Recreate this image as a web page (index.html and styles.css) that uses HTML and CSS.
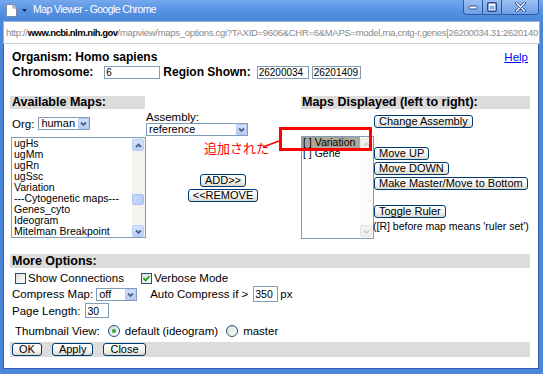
FILE: index.html
```html
<!DOCTYPE html>
<html lang="ja">
<head>
    <meta charset="UTF-8">
    <meta name="viewport" content="width=device-width, initial-scale=1.0">
    <title>Map Viewer</title>
    <link rel="stylesheet" href="styles.css">
</head>
<body>
<div class="window">
    <div class="titlebar">
        <svg class="page-icon" width="11" height="13" viewBox="0 0 11 13">
            <path d="M0.5 0.5h6.5l3.5 3.5v8.5h-10z" fill="#fff" stroke="#7d8ca3"/>
            <path d="M7 0.5v3.5h3.5" fill="#e4e9f0" stroke="#7d8ca3"/>
        </svg>
        <svg class="menu-arrow" width="5" height="3" viewBox="0 0 5 3"><path d="M0 0h5l-2.5 3z" fill="#10254f"/></svg>
        <span class="title">Map Viewer - Google Chrome</span>
        <div class="caption-buttons">
            <span class="cap-btn">
                <svg width="10" height="5" viewBox="0 0 10 5"><rect x="1" y="1" width="8" height="3" rx="1.5" fill="#fff" stroke="#27498a"/></svg>
            </span>
            <span class="cap-btn">
                <svg width="10" height="10" viewBox="0 0 10 10"><rect x="1" y="1" width="8" height="8" rx="1" fill="none" stroke="#27498a" stroke-width="2"/><rect x="2" y="2" width="6" height="6" fill="none" stroke="#fff" stroke-width="1"/><rect x="2" y="2" width="6" height="1.6" fill="#fff"/></svg>
            </span>
            <span class="cap-btn cap-close">
                <svg width="11" height="10" viewBox="0 0 11 10"><path d="M1.5 1L9.5 9M9.5 1L1.5 9" stroke="#27498a" stroke-width="3" stroke-linecap="round"/><path d="M1.5 1L9.5 9M9.5 1L1.5 9" stroke="#fff" stroke-width="1.4" stroke-linecap="round"/></svg>
            </span>
        </div>
    </div>

    <div class="addressbar">
        <span class="url-dim">http://</span><span class="url-host">www.ncbi.nlm.nih.gov</span><span class="url-dim">/mapview/maps_options.cgi?TAXID=9606&amp;CHR=6&amp;MAPS=model,rna,cntg-r,genes[26200034.31:2620140</span>
    </div>

    <div class="page">
        <div class="info-row">
            <b class="strong">Organism: Homo sapiens</b>
            <a href="#" class="help">Help</a>
        </div>
        <div class="region-row">
            <b class="strong">Chromosome:</b>
            <input type="text" class="field field-chrom" value="6">
            <b class="strong region-label">Region Shown:</b>
            <input type="text" class="field field-from" value="26200034">
            <input type="text" class="field field-to" value="26201409">
        </div>

        <div class="maps">
            <div class="bar bar-available">Available Maps:</div>
            <div class="bar bar-displayed">Maps Displayed (left to right):</div>

            <div class="org-cell">
                <span>Org:</span>
                <span class="combo combo-org">
                    <span class="combo-value">human</span>
                    <span class="combo-arrow"><svg width="9" height="9" viewBox="0 0 9 9"><path d="M2 3.5L4.5 6L7 3.5" fill="none" stroke="#4d6185" stroke-width="1.8"/></svg></span>
                </span>
            </div>
            <div class="assembly-cell">
                <div class="assembly-label">Assembly:</div>
                <span class="combo combo-assembly">
                    <span class="combo-value">reference</span>
                    <span class="combo-arrow"><svg width="9" height="9" viewBox="0 0 9 9"><path d="M2 3.5L4.5 6L7 3.5" fill="none" stroke="#4d6185" stroke-width="1.8"/></svg></span>
                </span>
            </div>
            <div class="change-cell">
                <button class="btn">Change Assembly</button>
            </div>

            <div class="listbox listbox-available">
                <ul class="options">
                    <li>ugHs</li>
                    <li>ugMm</li>
                    <li>ugRn</li>
                    <li>ugSsc</li>
                    <li>Variation</li>
                    <li>---Cytogenetic maps---</li>
                    <li>Genes_cyto</li>
                    <li>Ideogram</li>
                    <li>Mitelman Breakpoint</li>
                </ul>
                <div class="scrollbar">
                    <span class="sb-btn"><svg width="9" height="9" viewBox="0 0 9 9"><path d="M2 6L4.5 3.5L7 6" fill="none" stroke="#4d6185" stroke-width="1.8"/></svg></span>
                    <span class="sb-track"><span class="sb-thumb"></span></span>
                    <span class="sb-btn"><svg width="9" height="9" viewBox="0 0 9 9"><path d="M2 3.5L4.5 6L7 3.5" fill="none" stroke="#4d6185" stroke-width="1.8"/></svg></span>
                </div>
            </div>
            <div class="transfer">
                <button class="btn">ADD&gt;&gt;</button>
                <button class="btn">&lt;&lt;REMOVE</button>
            </div>

            <div class="listbox listbox-displayed">
                <ul class="options">
                    <li class="selected">[ ] Variation</li>
                    <li>[ ] Gene</li>
                </ul>
                <div class="scrollbar scrollbar-off">
                    <span class="sb-btn"><svg width="9" height="9" viewBox="0 0 9 9"><path d="M2 6L4.5 3.5L7 6" fill="none" stroke="#c9cdd6" stroke-width="1.6"/></svg></span>
                    <span class="sb-track"></span>
                    <span class="sb-btn"><svg width="9" height="9" viewBox="0 0 9 9"><path d="M2 3.5L4.5 6L7 3.5" fill="none" stroke="#c9cdd6" stroke-width="1.6"/></svg></span>
                </div>
            </div>
            <div class="move-buttons">
                <button class="btn">Move UP</button>
                <button class="btn">Move DOWN</button>
                <button class="btn">Make Master/Move to Bottom</button>
                <button class="btn btn-ruler">Toggle Ruler</button>
                <div class="ruler-note">([R] before map means 'ruler set')</div>
            </div>
        </div>

        <div class="bar bar-wide bar-more">More Options:</div>
        <div class="option-row row-checks">
            <span class="check"></span>
            <span>Show Connections</span>
            <span class="check check-on"><svg width="9" height="9" viewBox="0 0 9 9"><path d="M1.5 4.2L3.6 6.4L7.6 2.2" fill="none" stroke="#21a121" stroke-width="1.8"/></svg></span>
            <span>Verbose Mode</span>
        </div>
        <div class="option-row row-compress">
            <span>Compress Map:</span>
            <span class="combo combo-off">
                <span class="combo-value">off</span>
                <span class="combo-arrow"><svg width="9" height="9" viewBox="0 0 9 9"><path d="M2 3.5L4.5 6L7 3.5" fill="none" stroke="#4d6185" stroke-width="1.8"/></svg></span>
            </span>
            <span class="auto-label">Auto Compress if &gt;</span>
            <input type="text" class="field field-auto" value="350">
            <span>px</span>
        </div>
        <div class="option-row row-length">
            <span>Page Length:</span>
            <input type="text" class="field field-length" value="30">
        </div>
        <div class="option-row row-thumb">
            <span>Thumbnail View:</span>
            <span class="radio radio-on"></span>
            <span>default (ideogram)</span>
            <span class="radio"></span>
            <span>master</span>
        </div>
        <div class="bar bar-wide bar-actions">
            <button class="btn btn-wide">OK</button>
            <button class="btn btn-wide">Apply</button>
            <button class="btn btn-wide">Close</button>
        </div>

        <div class="note-text">追加された</div>
        <svg class="note-line" width="20" height="10" viewBox="0 0 20 10"><path d="M1 8L17 2" stroke="#f00" stroke-width="1.5"/></svg>
        <div class="note-box"></div>
    </div>
</div>
</body>
</html>
```

FILE: styles.css
```css
* {
    box-sizing: border-box;
}
body {
    margin: 0;
    font-family: "Liberation Sans", Arial, sans-serif;
    font-size: 11.5px;
    color: #000;
}
.window {
    width: 543px;
    height: 374px;
    display: flex;
    flex-direction: column;
    background: #4a86da;
    overflow: hidden;
}

/* title bar */
.titlebar {
    height: 21px;
    flex: none;
    display: flex;
    align-items: flex-start;
    background: linear-gradient(#74a8ee, #5590e2 55%, #4a86da);
    color: #fff;
}
.page-icon {
    margin: 4px 0 0 6px;
}
.menu-arrow {
    margin: 9px 0 0 5px;
}
.title {
    margin: 3px 0 0 6px;
    font-size: 10.5px;
    line-height: 13px;
    letter-spacing: -0.6px;
}
.caption-buttons {
    margin-left: auto;
    margin-right: 4px;
    display: flex;
    height: 15px;
    border: 1px solid #2c5aa8;
    border-top: none;
    border-radius: 0 0 4px 4px;
    overflow: hidden;
}
.cap-btn {
    width: 19px;
    display: flex;
    align-items: center;
    justify-content: center;
    background: linear-gradient(#9cc0f3, #6f9fe6);
    border-right: 1px solid #2c5aa8;
}
.cap-close {
    width: 36px;
    border-right: none;
}

/* address bar */
.addressbar {
    height: 23px;
    flex: none;
    margin: 0 3px;
    padding: 0 0 0 2px;
    display: flex;
    align-items: center;
    background: #fff;
    border: 1px solid #98b1d6;
    border-bottom-color: #c9d3e0;
    white-space: nowrap;
    overflow: hidden;
    font-size: 9.5px;
    letter-spacing: -0.3px;
}
.url-dim {
    color: #8a8a8a;
}
.url-host {
    color: #000;
    font-weight: bold;
    letter-spacing: -0.5px;
}

/* page */
.page {
    flex: 1;
    margin: 0 4px 5px 3px;
    padding: 6px 10px 0 6px;
    background: #fff;
    border: 1px solid #2d5fae;
    border-top: none;
    position: relative;
}
.strong {
    font-size: 12px;
    font-weight: bold;
}
.info-row {
    display: flex;
    align-items: center;
    height: 14px;
    padding-left: 2px;
}
.help {
    margin-left: auto;
    color: #0000ff;
    font-size: 11.5px;
}
.region-row {
    display: flex;
    align-items: center;
    height: 14px;
    margin-top: 1px;
    padding-left: 2px;
}
.field {
    height: 13px;
    padding: 0 1px;
    border: 1px solid #7f9db9;
    font-family: "Liberation Sans", Arial, sans-serif;
    font-size: 10px;
    color: #000;
    background: #fff;
}
.field-chrom {
    width: 56px;
    margin-left: 11px;
}
.region-label {
    margin-left: 3px;
}
.field-from {
    width: 52px;
    margin-left: 6px;
}
.field-to {
    width: 49px;
    margin-left: 3px;
}

/* map lists */
.maps {
    display: grid;
    grid-template-columns: 136px 111px 44px 73px 156px;
    grid-template-rows: 13px 27px 103px;
    margin-top: 17px;
}
.bar {
    background: #dcdcdc;
    font-size: 12.5px;
    font-weight: bold;
    line-height: 13px;
    padding-left: 2px;
}
.bar-available {
    grid-column: 1;
    grid-row: 1;
    width: 135px;
}
.bar-displayed {
    grid-column: 4 / 6;
    grid-row: 1;
    padding-left: 1px;
}
.org-cell {
    grid-column: 1;
    grid-row: 2;
    display: flex;
    align-items: center;
    gap: 4px;
    padding: 8px 0 0 2px;
    align-self: start;
}
.assembly-cell {
    grid-column: 2 / 4;
    grid-row: 2;
    padding-top: 2px;
}
.assembly-label {
    line-height: 12px;
}
.change-cell {
    grid-column: 5;
    grid-row: 2;
    padding-top: 6px;
}
.combo {
    display: flex;
    align-items: center;
    height: 13px;
    border: 1px solid #7f9db9;
    background: #fff;
    font-size: 11px;
    line-height: 11px;
}
.combo-value {
    flex: 1;
    padding-left: 2px;
}
.combo-arrow {
    width: 11px;
    height: 11px;
    display: flex;
    align-items: center;
    justify-content: center;
    background: linear-gradient(#d4e1fc, #b6cbf7);
    border: 1px solid #b5c8f3;
    border-radius: 1px;
}
.combo-org {
    width: 52px;
}
.combo-assembly {
    width: 102px;
}
.combo-off {
    width: 41px;
    margin-left: 3px;
}

.listbox {
    display: flex;
    border: 1px solid #7f9db9;
    background: #fff;
}
.listbox-available {
    grid-column: 1;
    grid-row: 3;
    width: 135px;
    height: 101px;
    margin: 1px 0 0 1px;
}
.listbox-displayed {
    grid-column: 4;
    grid-row: 3;
    width: 73px;
    height: 103px;
}
.options {
    flex: 1;
    list-style: none;
    margin: 0;
    padding: 0;
    font-size: 10.5px;
    line-height: 11px;
    white-space: nowrap;
    overflow: hidden;
}
.options li {
    padding-left: 1px;
}
.listbox-available .options {
    padding-left: 1px;
}
.options .selected {
    background: #aca797;
}
.scrollbar {
    width: 13px;
    display: flex;
    flex-direction: column;
    padding: 1px 1px 0 0;
    background: #f4f3ee;
}
.sb-btn {
    height: 12px;
    display: flex;
    align-items: center;
    justify-content: center;
    background: linear-gradient(#d8e4fc, #bccffa);
    border: 1px solid #b8cbf5;
    border-radius: 2px;
}
.sb-track {
    flex: 1;
    display: flex;
    flex-direction: column;
    padding-top: 43px;
}
.sb-thumb {
    height: 11px;
    background: linear-gradient(90deg, #c9d8fb, #b9cdf8);
    border: 1px solid #a9c0f0;
    border-radius: 2px;
}
.scrollbar-off {
    background: #fbfbfa;
    padding-bottom: 1px;
}
.scrollbar-off .sb-btn {
    background: #f0f0ee;
    border-color: #e4e4e0;
}

.transfer {
    grid-column: 2;
    grid-row: 3;
    display: flex;
    flex-direction: column;
    align-items: center;
    justify-content: center;
    gap: 2px;
    padding-left: 43px;
}
.move-buttons {
    grid-column: 5;
    grid-row: 3;
    display: flex;
    flex-direction: column;
    align-items: flex-start;
    gap: 2px;
    padding-top: 11px;
}
.btn-ruler {
    margin-top: 13px;
}
.ruler-note {
    margin-left: -1px;
    font-size: 10.5px;
    line-height: 12px;
    white-space: nowrap;
}
.btn {
    height: 13px;
    padding: 0 4px;
    border: 1px solid #003c74;
    border-radius: 3px;
    background: linear-gradient(#ffffff, #f3f2ec 60%, #dcd8cc);
    font-family: "Liberation Sans", Arial, sans-serif;
    font-size: 11px;
    line-height: 11px;
    color: #000;
    white-space: nowrap;
}

/* more options */
.bar-wide {
    width: 520px;
}
.bar-more {
    margin-top: 15px;
    height: 14px;
    line-height: 14px;
}
.option-row {
    display: flex;
    align-items: center;
    white-space: nowrap;
}
.row-checks {
    height: 14px;
    margin-top: 3px;
    padding-left: 5px;
}
.check {
    width: 11px;
    height: 11px;
    margin-right: 2px;
    display: flex;
    align-items: center;
    justify-content: center;
    border: 1px solid #1c5180;
    background: linear-gradient(135deg, #dcdcd5, #fff);
}
.check-on {
    margin-left: 17px;
}
.row-compress {
    height: 16px;
    margin-top: 1px;
    padding-left: 2px;
}
.auto-label {
    margin-left: 13px;
}
.field-auto {
    width: 25px;
    height: 16px;
    margin: 0 2px 0 5px;
    font-size: 10.5px;
}
.row-length {
    height: 15px;
    margin-top: 1px;
    padding-left: 2px;
}
.field-length {
    width: 24px;
    height: 15px;
    margin-left: 5px;
    font-size: 10.5px;
}
.row-thumb {
    height: 14px;
    margin-top: 6px;
    padding-left: 5px;
}
.radio {
    width: 12px;
    height: 12px;
    margin: 0 5px 0 8px;
    display: flex;
    align-items: center;
    justify-content: center;
    border: 1px solid #1c5180;
    border-radius: 50%;
    background: linear-gradient(135deg, #dcdcd5, #fff);
}
.radio-on::after {
    content: "";
    width: 4px;
    height: 4px;
    border-radius: 50%;
    background: #2fa82f;
}
.bar-actions {
    margin-top: 4px;
    height: 15px;
    display: flex;
    align-items: flex-start;
    gap: 10px;
    padding-top: 1px;
}
.btn-wide {
    padding: 0 6px;
}

/* red annotation over the form */
.note-text {
    position: absolute;
    left: 200px;
    top: 97px;
    color: #f00;
    font-family: "Noto Sans CJK JP", sans-serif;
    font-size: 13px;
    line-height: 14px;
}
.note-line {
    position: absolute;
    left: 258px;
    top: 95px;
}
.note-box {
    position: absolute;
    left: 275px;
    top: 83px;
    width: 93px;
    height: 24px;
    border: 3px solid #f00;
}
```
